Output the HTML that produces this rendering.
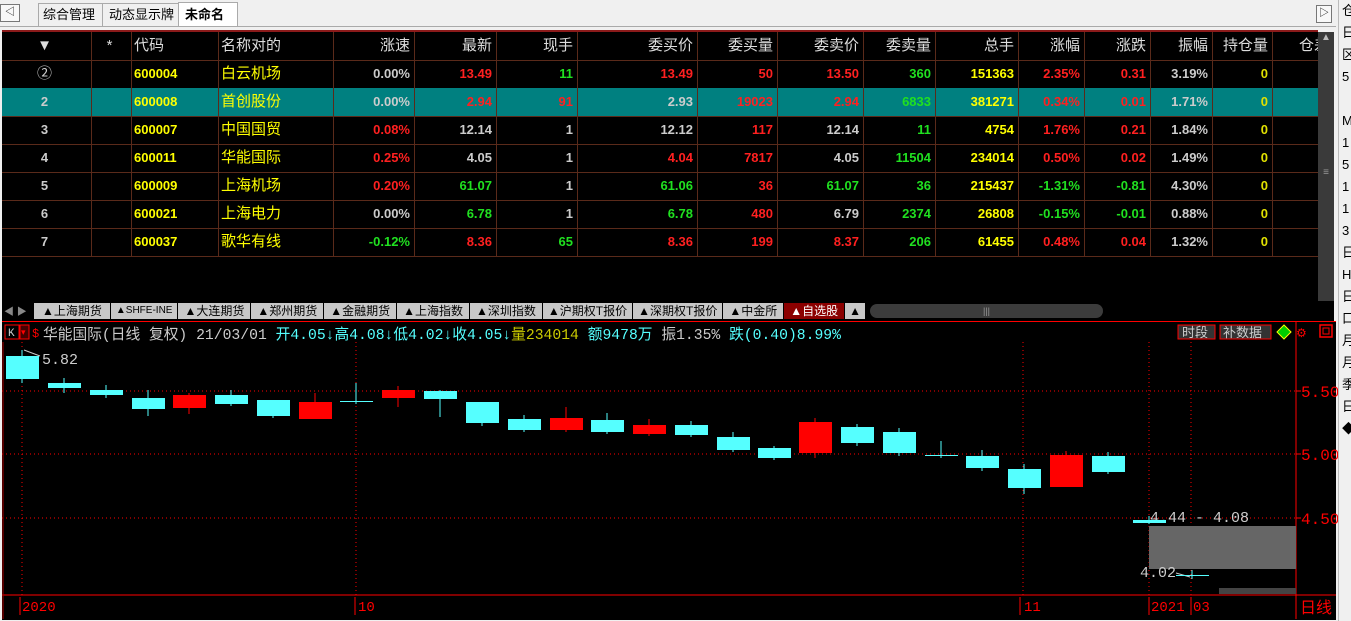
<!DOCTYPE html>
<html><head><meta charset="utf-8"><style>
body{margin:0;width:1351px;height:621px;overflow:hidden;background:#f0f0f0;font-family:"Liberation Sans","Noto Sans CJK SC",sans-serif;position:relative}
.a{position:absolute}
#grid{left:2px;top:30px;width:1316px;height:271px;background:#000;border-top:2px solid #8b1a1a}
.r{position:absolute;left:0;width:1316px;height:28px;border-bottom:1px solid #5a2a1a}
.c{position:absolute;top:0;height:28px;line-height:28px;font-size:13px;font-weight:bold;border-right:1px solid #5a2a1a;box-sizing:border-box;padding-right:4px;text-align:right;white-space:nowrap}
.h .c{font-weight:normal;font-size:15px;color:#ddd}
.w{color:#ccc}.y{color:#ff0}.rd{color:#ff2020}.g{color:#20e020}.yl{color:#e0e000}
.nm{font-weight:normal!important;font-size:15px!important;text-align:left!important;padding-left:2px}
</style></head><body>
<div class="a" style="left:0;top:4px;width:18px;height:16px;border:1px solid #777;background:#f8f8f8;font-size:10px;line-height:16px;text-align:center">◁</div>
<div class="a" style="left:38px;top:3px;width:62px;height:22px;border:1px solid #aaa;border-bottom:none;background:#f0f0f0;font-size:13px;line-height:22px;padding-left:4px">综合管理</div>
<div class="a" style="left:102px;top:3px;width:74px;height:22px;border:1px solid #aaa;border-bottom:none;background:#f0f0f0;font-size:13px;line-height:22px;padding-left:6px;overflow:hidden">动态显示牌</div>
<div class="a" style="left:178px;top:2px;width:52px;height:24px;border:1px solid #aaa;border-bottom:none;background:#fff;font-size:13px;font-weight:bold;line-height:24px;padding-left:6px">未命名</div>
<div class="a" style="left:1316px;top:5px;width:14px;height:16px;border:1px solid #777;background:#f8f8f8;font-size:10px;line-height:16px;text-align:center">▷</div>
<div class="a" style="left:0;top:26px;width:1336px;height:1px;background:#aaa"></div>

<div id="grid" class="a">
<div class="r h" style="top:0">
<div class="c" style="left:0;width:90px;text-align:center">▼</div>
<div class="c" style="left:90px;width:40px;text-align:center">*</div>
<div class="c nm" style="left:130px;width:87px;color:#ddd">代码</div>
<div class="c nm" style="left:217px;width:115px;color:#ddd">名称对的</div>
<div class="c" style="left:332px;width:81px">涨速</div>
<div class="c" style="left:413px;width:82px">最新</div>
<div class="c" style="left:495px;width:81px">现手</div>
<div class="c" style="left:576px;width:120px">委买价</div>
<div class="c" style="left:696px;width:80px">委买量</div>
<div class="c" style="left:776px;width:86px">委卖价</div>
<div class="c" style="left:862px;width:72px">委卖量</div>
<div class="c" style="left:934px;width:83px">总手</div>
<div class="c" style="left:1017px;width:66px">涨幅</div>
<div class="c" style="left:1083px;width:66px">涨跌</div>
<div class="c" style="left:1149px;width:62px">振幅</div>
<div class="c" style="left:1211px;width:60px">持仓量</div>
<div class="c" style="left:1271px;width:45px;border:none;text-align:left;padding-left:26px">仓差</div>
</div>
</div>
<div class="a" style="left:1318px;top:32px;width:16px;height:269px;background:#3a3a3a"><div style="color:#bbb;font-size:10px;text-align:center">▲</div><div style="position:absolute;top:135px;width:16px;text-align:center;color:#999;font-size:10px">≡</div></div>

<div class="a" style="left:2px;top:301px;width:1332px;height:20px;background:#000"></div>
<div class="a" style="left:4px;top:303px;color:#888;font-size:10px">◀ ▶</div>
<div class="a" style="left:34px;top:303px;height:16px;display:flex;font-size:12px;line-height:16px">
<span style="background:#c8c8c8;padding:0 8px;margin-right:1px">▲上海期货</span><span style="background:#c8c8c8;padding:0 5px;margin-right:1px;font-size:10px">▲SHFE-INE</span><span style="background:#c8c8c8;padding:0 6px;margin-right:1px">▲大连期货</span><span style="background:#c8c8c8;padding:0 6px;margin-right:1px">▲郑州期货</span><span style="background:#c8c8c8;padding:0 6px;margin-right:1px">▲金融期货</span><span style="background:#c8c8c8;padding:0 6px;margin-right:1px">▲上海指数</span><span style="background:#c8c8c8;padding:0 6px;margin-right:1px">▲深圳指数</span><span style="background:#c8c8c8;padding:0 5px;margin-right:1px">▲沪期权T报价</span><span style="background:#c8c8c8;padding:0 5px;margin-right:1px">▲深期权T报价</span><span style="background:#c8c8c8;padding:0 6px;margin-right:1px">▲中金所</span><span style="background:#8b0000;color:#fff;padding:0 6px;margin-right:1px">▲自选股</span><span style="background:#c8c8c8;padding:0 4px">▲</span>
</div>
<div class="a" style="left:870px;top:304px;width:233px;height:14px;background:#3c3c3c;border-radius:7px;color:#999;font-size:9px;text-align:center;line-height:14px">|||</div>

<div class="a" style="left:2px;top:321px;width:1334px;height:298px;background:#000;border-top:1px solid #f00"></div>
<svg class="a" style="left:0;top:0" width="1338" height="621" font-family="Liberation Mono,Noto Sans CJK SC,monospace">
<g stroke="#f00" stroke-dasharray="1,3">
<line x1="2" y1="391" x2="1296" y2="391"/><line x1="2" y1="454" x2="1296" y2="454"/><line x1="2" y1="518" x2="1296" y2="518"/>
<line x1="22" y1="342" x2="22" y2="595"/><line x1="356" y1="342" x2="356" y2="595"/><line x1="1023" y1="342" x2="1023" y2="595"/><line x1="1149" y1="342" x2="1149" y2="595"/><line x1="1191" y1="342" x2="1191" y2="595"/>
</g>
<line x1="1296" y1="322" x2="1296" y2="619" stroke="#f00"/>
<line x1="2" y1="595" x2="1336" y2="595" stroke="#f00"/>
<line x1="3" y1="342" x2="3" y2="619" stroke="#a00"/>
<g stroke="#f00"><line x1="20" y1="597" x2="20" y2="615"/><line x1="355" y1="597" x2="355" y2="615"/><line x1="1020" y1="597" x2="1020" y2="615"/><line x1="1149" y1="597" x2="1149" y2="615"/><line x1="1191" y1="597" x2="1191" y2="615"/></g>
<g fill="#f00" font-size="14"><text x="22" y="611">2020</text><text x="358" y="611">10</text><text x="1024" y="611">11</text><text x="1151" y="611">2021</text><text x="1193" y="611">03</text>
<text x="1301" y="397" font-size="16">5.50</text><text x="1301" y="460" font-size="16">5.00</text><text x="1301" y="524" font-size="16">4.50</text></g>
<g stroke="#f00"><line x1="1296" y1="391" x2="1301" y2="391"/><line x1="1296" y1="454" x2="1301" y2="454"/><line x1="1296" y1="518" x2="1301" y2="518"/></g>
<text x="1300" y="613" fill="#f00" font-size="16" font-family="Noto Sans CJK SC">日线</text>
<rect x="1149" y="526" width="147" height="43" fill="#666"/>
<rect x="1219" y="588" width="77" height="6" fill="#444"/>
<g fill="#ccc" font-size="15"><text x="42" y="364">5.82</text><text x="1150" y="522">4.44 - 4.08</text><text x="1140" y="577">4.02</text></g>
<line x1="24" y1="350" x2="40" y2="356" stroke="#ccc"/>
<line x1="1176" y1="573" x2="1190" y2="577" stroke="#ccc"/>
<g id="cs"></g>
<rect x="5" y="325" width="14" height="14" fill="none" stroke="#f00"/><text x="8" y="336" fill="#ccc" font-size="11">K</text>
<rect x="20" y="325" width="9" height="14" fill="#400" stroke="#f00"/><text x="21" y="335" fill="#f00" font-size="9">▾</text>
<text x="32" y="337" fill="#f00" font-size="12">$</text>
<text x="43" y="339" font-size="15" textLength="798" lengthAdjust="spacingAndGlyphs"><tspan fill="#ccc">华能国际(日线 复权) 21/03/01 </tspan><tspan fill="#5ff">开4.05↓高4.08↓低4.02↓收4.05↓</tspan><tspan fill="#cc0">量234014 </tspan><tspan fill="#5ff">额9478万 </tspan><tspan fill="#ccc">振1.35% </tspan><tspan fill="#5ff">跌(0.40)8.99%</tspan></text>
<rect x="1178" y="325" width="37" height="14" fill="#333" stroke="#f00"/><text x="1182" y="337" fill="#ccc" font-size="13">时段</text>
<rect x="1220" y="325" width="51" height="14" fill="#333" stroke="#f00"/><text x="1223" y="337" fill="#ccc" font-size="13">补数据</text>
<polygon points="1284,325 1291,332 1284,339 1277,332" fill="#0c0" stroke="#ff0"/>
<text x="1296" y="337" fill="#f00" font-size="12">⚙</text>
<rect x="1320" y="325" width="12" height="12" fill="none" stroke="#f00" stroke-width="1.5"/><rect x="1323" y="328" width="6" height="6" fill="none" stroke="#f00"/>
</svg>

<div class="a" style="left:1338px;top:0;width:13px;height:621px;background:#f0f0f0;border-left:1px solid #bbb;font-size:13px;line-height:22px;color:#000;overflow:hidden;padding-left:3px">仓<br>日<br>区<br>5<br><br>M<br>1<br>5<br>1<br>1<br>3<br>日<br>H<br>日<br>口<br>月<br>月<br>季<br>日<br>◆</div>

<script>
var rows=[
["②","600004","白云机场","w0.00%","r13.49","g11","r13.49","r50","r13.50","g360","y151363","r2.35%","r0.31","w3.19%"],
["2","600008","首创股份","w0.00%","r2.94","r91","w2.93","r19023","r2.94","g6833","y381271","r0.34%","r0.01","w1.71%"],
["3","600007","中国国贸","r0.08%","w12.14","w1","w12.12","r117","w12.14","g11","y4754","r1.76%","r0.21","w1.84%"],
["4","600011","华能国际","r0.25%","w4.05","w1","r4.04","r7817","w4.05","g11504","y234014","r0.50%","r0.02","w1.49%"],
["5","600009","上海机场","r0.20%","g61.07","w1","g61.06","r36","g61.07","g36","y215437","g-1.31%","g-0.81","w4.30%"],
["6","600021","上海电力","w0.00%","g6.78","w1","g6.78","r480","w6.79","g2374","y26808","g-0.15%","g-0.01","w0.88%"],
["7","600037","歌华有线","g-0.12%","r8.36","g65","r8.36","r199","r8.37","g206","y61455","r0.48%","r0.04","w1.32%"]];
var L=[[332,81],[413,82],[495,81],[576,120],[696,80],[776,86],[862,72],[934,83],[1017,66],[1083,66],[1149,62]];
var cm={w:"w",r:"rd",g:"g",y:"y"};
var g=document.getElementById('grid'),h='';
rows.forEach(function(r,i){
 var bg=i==1?'background:#008080;':'';
 h+='<div class="r" style="top:'+(28*(i+1))+'px;'+bg+'">';
 h+='<div class="c w" style="left:0;width:90px;text-align:center;font-weight:'+(i==0?'normal;font-size:15px':'bold')+'">'+r[0]+'</div>';
 h+='<div class="c" style="left:90px;width:40px"></div>';
 h+='<div class="c y" style="left:130px;width:87px;text-align:left;padding-left:2px">'+r[1]+'</div>';
 h+='<div class="c y nm" style="left:217px;width:115px">'+r[2]+'</div>';
 for(var k=0;k<11;k++){var v=r[k+3];h+='<div class="c '+cm[v[0]]+'" style="left:'+L[k][0]+'px;width:'+L[k][1]+'px">'+v.slice(1)+'</div>';}
 h+='<div class="c yl" style="left:1211px;width:60px">0</div><div class="c" style="left:1271px;width:45px;border:none"></div></div>';
});
g.insertAdjacentHTML('beforeend',h);
var C=[[6,356,379,'c',350,383],[48,383,388,'c',378,393],[90,390,395,'c',385,398],[132,398,409,'c',390,416],[173,395,408,'r',393,414],[215,395,404,'c',390,406],[257,400,416,'c',400,418],[299,402,419,'r',393,419],[340,401,402,'c',383,404],[382,390,398,'r',386,407],[424,391,399,'c',390,417],[466,402,423,'c',402,426],[508,419,430,'c',415,432],[550,418,430,'r',407,432],[591,420,432,'c',413,434],[633,425,434,'r',419,436],[675,425,435,'c',421,437],[717,437,450,'c',432,452],[758,448,458,'c',446,460],[799,422,453,'r',418,458],[841,427,443,'c',424,446],[883,432,453,'c',428,456],[925,455,456,'c',441,458],[966,456,468,'c',450,471],[1008,469,488,'c',464,494],[1050,455,487,'r',451,487],[1092,456,472,'c',452,474],[1133,520,523,'c',516,524],[1176,575,576,'c',570,579]];
var s='';C.forEach(function(c){var col=c[3]=='c'?'#55ffff':'#ff0000';s+='<line x1="'+(c[0]+16)+'" y1="'+c[4]+'" x2="'+(c[0]+16)+'" y2="'+c[5]+'" stroke="'+col+'"/><rect x="'+c[0]+'" y="'+c[1]+'" width="33" height="'+Math.max(1,c[2]-c[1])+'" fill="'+col+'"/>';});
document.getElementById('cs').innerHTML=s;
</script>
</body></html>
